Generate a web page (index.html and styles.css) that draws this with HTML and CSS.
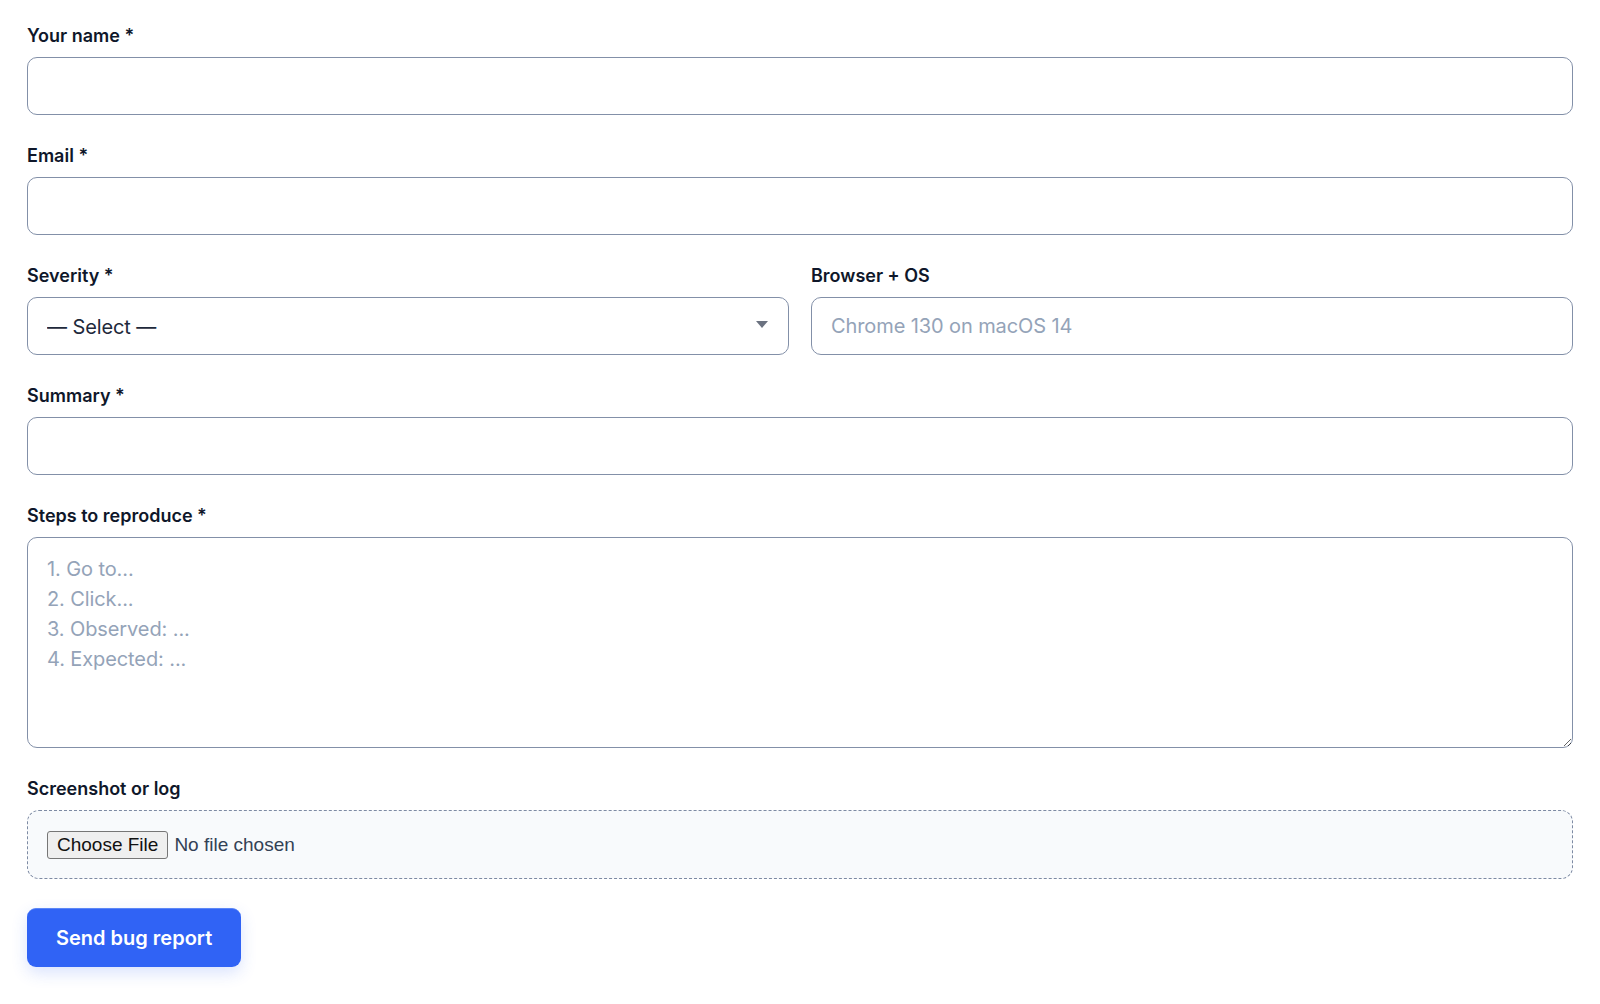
FILE: index.html
```html
<!DOCTYPE html>
<html lang="en">
<head>
<meta charset="utf-8">
<title>Bug report</title>
<link rel="stylesheet" href="styles.css">
</head>
<body>
<form class="form">
  <div class="field">
    <label class="label" for="name">Your name *</label>
    <input class="control" id="name" type="text">
  </div>
  <div class="field">
    <label class="label" for="email">Email *</label>
    <input class="control" id="email" type="email">
  </div>
  <div class="row">
    <div class="field">
      <label class="label" for="sev">Severity *</label>
      <div class="select-wrap">
        <select class="control select" id="sev">
          <option>— Select —</option>
          <option>Low</option>
          <option>Medium</option>
          <option>High</option>
          <option>Critical</option>
        </select>
        <svg class="caret" width="12" height="7" viewBox="0 0 12 7"><path d="M0 0h12L6 7z" fill="#6b7280"/></svg>
      </div>
    </div>
    <div class="field">
      <label class="label" for="env">Browser + OS</label>
      <input class="control" id="env" type="text" placeholder="Chrome 130 on macOS 14">
    </div>
  </div>
  <div class="field">
    <label class="label" for="sum">Summary *</label>
    <input class="control" id="sum" type="text">
  </div>
  <div class="field">
    <label class="label" for="steps">Steps to reproduce *</label>
    <textarea class="control textarea" id="steps" placeholder="1. Go to...&#10;2. Click...&#10;3. Observed: ...&#10;4. Expected: ..."></textarea>
  </div>
  <div class="field">
    <label class="label" for="file">Screenshot or log</label>
    <div class="drop">
      <input class="file" id="file" type="file">
    </div>
  </div>
  <div class="actions">
    <button class="submit" type="button">Send bug report</button>
  </div>
</form>
</body>
</html>
```

FILE: styles.css
```css
* { box-sizing: border-box; }
html, body { margin: 0; padding: 0; background: #ffffff; }
body {
  font-family: Inter, "Noto Sans", sans-serif;
  color: #0f172a;
}
.form {
  padding: 24px 27px 40px;
  display: flex;
  flex-direction: column;
  gap: 29px;
}
.field {
  display: flex;
  flex-direction: column;
  gap: 10px;
  min-width: 0;
}
.row {
  display: grid;
  grid-template-columns: 1fr 1fr;
  gap: 22px;
}
.label {
  font-size: 18px;
  font-weight: 600;
  line-height: 23px;
  color: #0f172a;
}
.control {
  display: block;
  width: 100%;
  height: 58px;
  margin: 0;
  padding: 16px 19px;
  border: 1.5px solid #8390a8;
  border-radius: 10px;
  font-family: Inter, "Noto Sans", sans-serif;
  font-size: 20px;
  line-height: 24px;
  letter-spacing: -0.1px;
  color: #1e293b;
  background: #ffffff;
  outline: none;
}
.control::placeholder { color: #94a3b8; opacity: 1; }
.select-wrap { position: relative; }
.select {
  -webkit-appearance: none;
  appearance: none;
  padding-top: 16px;
  padding-bottom: 14px;
  color: #1e293b;
}
.caret {
  position: absolute;
  right: 21px;
  top: 24px;
  pointer-events: none;
}
.textarea {
  height: 211px;
  line-height: 30px;
  padding: 16px 19px;
  resize: vertical;
}
.drop {
  border: 1.5px dashed #7d8aa3;
  border-radius: 12px;
  background: #f8fafc;
  padding: 20px 19px 19px;
}
.file {
  font-family: "Liberation Sans", Arial, sans-serif;
  font-size: 19px;
  color: #334155;
}
.file::file-selector-button {
  font-family: "Liberation Sans", Arial, sans-serif;
  font-size: 19px;
  color: #111111;
  background: #efefef;
  border: 1px solid #767676;
  border-radius: 3px;
  padding: 2px 9px;
  margin-right: 6px;
}
.submit {
  height: 59px;
  padding: 0 29px;
  border: none;
  border-top: 1px solid #5b86f7;
  border-radius: 9px;
  background: #3063f5;
  color: #ffffff;
  font-family: Inter, "Noto Sans", sans-serif;
  font-size: 20px;
  font-weight: 600;
  box-shadow: 0 6px 16px rgba(48, 99, 245, 0.18);
  cursor: pointer;
}
```
